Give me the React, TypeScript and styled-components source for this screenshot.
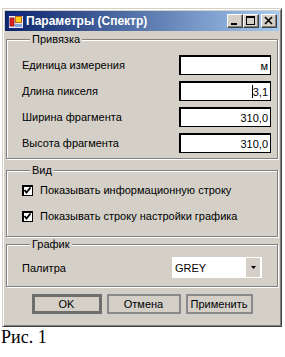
import React from 'react';
import styled, { createGlobalStyle } from 'styled-components';

const GlobalStyle = createGlobalStyle`
  html, body {
    margin: 0;
    padding: 0;
    background: #fff;
  }
`;

const Page = styled.div`
  padding: 8px 0 0 2px;
  width: 285px;
  height: 357px;
  box-sizing: border-box;
  font-family: "Liberation Sans", Arial, sans-serif;
  font-size: 11px;
  color: #000;
`;

const Window = styled.div`
  width: 280px;
  box-sizing: border-box;
  background: #d4d0c8;
  border: 1px solid;
  border-color: #d4d0c8 #404040 #404040 #d4d0c8;
  box-shadow: inset 1px 1px 0 #fff, inset -1px -1px 0 #808080;
  padding: 2px;
  display: flex;
  flex-direction: column;
`;

const TitleBar = styled.div`
  height: 20px;
  display: flex;
  align-items: center;
  padding: 0 2px 0 3px;
  background: linear-gradient(to right, #0a246a, #a6caf0);
`;

const Title = styled.span`
  flex: 1;
  margin-left: 2px;
  color: #fff;
  font-weight: bold;
  font-size: 12px;
  white-space: nowrap;
`;

const CaptionButton = styled.button<{ $gap?: number }>`
  width: 16px;
  height: 14px;
  padding: 0;
  margin-left: ${p => p.$gap ?? 0}px;
  display: flex;
  align-items: center;
  justify-content: center;
  background: #d4d0c8;
  border: 1px solid;
  border-color: #fff #404040 #404040 #fff;
  box-shadow: inset -1px -1px 0 #808080;
`;

const Body = styled.div`
  display: flex;
  flex-direction: column;
  padding: 1px 1px 10px 1px;
`;

const Group = styled.fieldset<{ $top: number; $pt: number; $pb: number }>`
  margin: ${p => p.$top}px 0 0 0;
  padding: ${p => p.$pt}px 6px ${p => p.$pb}px 15px;
  border: 1px solid #808080;
  box-shadow: inset 1px 1px 0 #fff, 1px 1px 0 #fff;
  min-width: 0;
  display: flex;
  flex-direction: column;
`;

const Legend = styled.legend`
  margin-left: 8px;
  padding: 0 2px;
  line-height: 13px;
  background: #d4d0c8;
  position: relative;
`;

const FieldRow = styled.div<{ $gap?: number }>`
  display: flex;
  align-items: center;
  justify-content: space-between;
  height: 20px;
  margin-top: ${p => p.$gap ?? 0}px;
`;

const TextBox = styled.div`
  width: 92px;
  height: 20px;
  box-sizing: border-box;
  border: 2px solid #000;
  border-right-width: 1.5px;
  border-bottom-width: 1.5px;
  background: #fff;
  display: flex;
  align-items: center;
  justify-content: flex-end;
  padding-right: 2px;
  font-size: 11px;
`;

const Caret = styled.span`
  display: inline-block;
  width: 1px;
  height: 13px;
  background: #000;
`;

const CheckRow = styled.label<{ $gap?: number }>`
  display: flex;
  align-items: center;
  gap: 7px;
  height: 16px;
  margin-top: ${p => p.$gap ?? 0}px;
`;

const CheckBox = styled.span`
  width: 11px;
  height: 11px;
  box-sizing: border-box;
  border: 1px solid #000;
  box-shadow: inset 1px 1px 0 #000;
  background: #fff;
  display: flex;
  align-items: center;
  justify-content: center;
`;

const Combo = styled.div`
  width: 90px;
  height: 21px;
  margin-right: 9px;
  box-sizing: border-box;
  background: #fff;
  display: flex;
  align-items: center;
  padding: 1px 2px 1px 3px;
  font-size: 11px;
`;

const ComboText = styled.span`
  flex: 1;
`;

const ComboButton = styled.span`
  width: 14px;
  height: 19px;
  background: #d4d0c8;
  display: flex;
  align-items: center;
  justify-content: center;
`;

const ButtonBar = styled.div`
  display: flex;
  justify-content: center;
  gap: 5px;
  margin-top: 7px;
`;

const Button = styled.button<{ $w: number; $default?: boolean }>`
  width: ${p => p.$w}px;
  height: 20px;
  padding: 0;
  background: #d4d0c8;
  border: ${p => (p.$default ? '3px solid #6e6e6e' : '2px solid #8a8a8a')};
  font-family: "Liberation Sans", Arial, sans-serif;
  font-size: 11px;
  color: #000;
`;

const Caption = styled.div`
  font-family: "Liberation Serif", "Times New Roman", serif;
  font-size: 18px;
  line-height: 20px;
  margin-left: -1px;
`;

const AppIcon = () => (
  <svg width="16" height="16" viewBox="0 0 16 16">
    <rect x="0.5" y="0.5" width="15" height="15" fill="#e8e8f0" stroke="#1c2c80" />
    <rect x="1" y="1" width="14" height="2" fill="#1c2c80" />
    <rect x="2" y="5" width="4" height="8" fill="#e02020" stroke="#801010" strokeWidth="0.8" />
    <rect x="7.5" y="3.5" width="6" height="6" fill="#ffd020" stroke="#c07010" />
    <rect x="7" y="11" width="7" height="3" fill="#7fa8e0" />
  </svg>
);

const App = (): React.ReactElement => (
  <Page>
    <GlobalStyle />
    <Window>
      <TitleBar>
        <AppIcon />
        <Title>Параметры (Спектр)</Title>
        <CaptionButton>
          <svg width="14" height="12" viewBox="0 0 14 12">
            <rect x="3" y="8" width="6" height="2" fill="#000" />
          </svg>
        </CaptionButton>
        <CaptionButton>
          <svg width="14" height="12" viewBox="0 0 14 12">
            <rect x="2.5" y="1.5" width="8" height="8" fill="none" stroke="#000" />
            <rect x="2" y="1" width="9" height="2" fill="#000" />
          </svg>
        </CaptionButton>
        <CaptionButton $gap={2}>
          <svg width="14" height="12" viewBox="0 0 14 12">
            <path d="M3 2 L10 9 M10 2 L3 9" stroke="#000" strokeWidth="1.6" />
          </svg>
        </CaptionButton>
      </TitleBar>
      <Body>
        <Group $top={1} $pt={9} $pb={5}>
          <Legend>Привязка</Legend>
          <FieldRow>
            <span>Единица измерения</span>
            <TextBox>м</TextBox>
          </FieldRow>
          <FieldRow $gap={6}>
            <span>Длина пикселя</span>
            <TextBox>
              <Caret />3,1
            </TextBox>
          </FieldRow>
          <FieldRow $gap={6}>
            <span>Ширина фрагмента</span>
            <TextBox>310,0</TextBox>
          </FieldRow>
          <FieldRow $gap={6}>
            <span>Высота фрагмента</span>
            <TextBox>310,0</TextBox>
          </FieldRow>
        </Group>
        <Group $top={5} $pt={5} $pb={12}>
          <Legend>Вид</Legend>
          <CheckRow>
            <CheckBox>
              <svg width="9" height="9" viewBox="0 0 9 9">
                <path d="M1.5 4 L3.5 6.5 L7.5 1.5" fill="none" stroke="#000" strokeWidth="1.8" />
              </svg>
            </CheckBox>
            Показывать информационную строку
          </CheckRow>
          <CheckRow $gap={10}>
            <CheckBox>
              <svg width="9" height="9" viewBox="0 0 9 9">
                <path d="M1.5 4 L3.5 6.5 L7.5 1.5" fill="none" stroke="#000" strokeWidth="1.8" />
              </svg>
            </CheckBox>
            Показывать строку настройки графика
          </CheckRow>
        </Group>
        <Group $top={1} $pt={6} $pb={8}>
          <Legend>График</Legend>
          <FieldRow style={{ height: 21 }}>
            <span>Палитра</span>
            <Combo>
              <ComboText>GREY</ComboText>
              <ComboButton>
                <svg width="5" height="3" viewBox="0 0 5 3">
                  <path d="M0 0 H5 L2.5 3 Z" fill="#000" />
                </svg>
              </ComboButton>
            </Combo>
          </FieldRow>
        </Group>
        <ButtonBar>
          <Button $w={70} $default>OK</Button>
          <Button $w={74}>Отмена</Button>
          <Button $w={67}>Применить</Button>
        </ButtonBar>
      </Body>
    </Window>
    <Caption>Рис. 1</Caption>
  </Page>
);

export default App;
